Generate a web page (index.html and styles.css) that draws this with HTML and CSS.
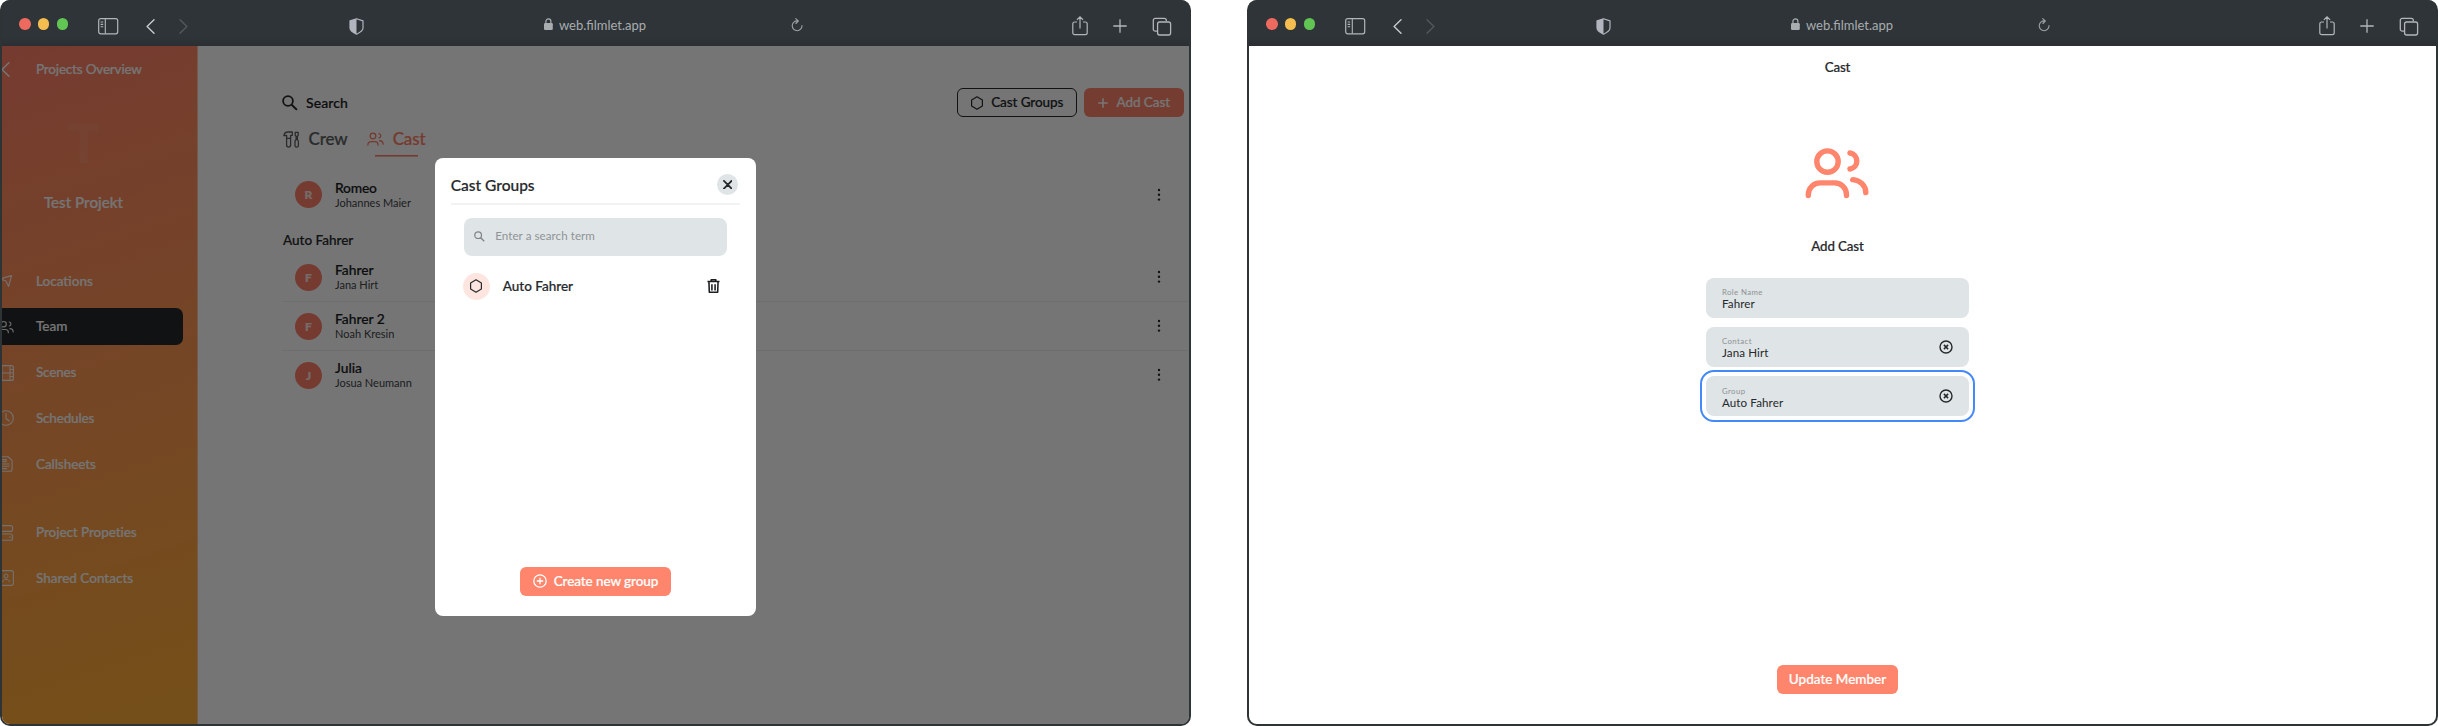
FILE: index.html
```html
<!DOCTYPE html>
<html lang="en">
<head>
<meta charset="utf-8">
<title>filmlet</title>
<link rel="stylesheet" href="styles.css">
</head>
<body>
<svg class="defs" width="0" height="0">
  <symbol id="i-panel" viewBox="0 0 21 17"><rect x=".7" y=".7" width="19" height="15.1" rx="2" fill="none" stroke="currentColor" stroke-width="1.2"/><path d="M7.3 1v14.500M2.600 4h2.600M2.600 6.400h2.600M2.600 8.800h2.600" fill="none" stroke="currentColor" stroke-width="1.100"/></symbol>
  <symbol id="i-left" viewBox="0 0 9 15"><path d="M8 .8 1.100 7.500 8 14.200" fill="none" stroke="currentColor" stroke-width="1.400" stroke-linecap="round" stroke-linejoin="round"/></symbol>
  <symbol id="i-right" viewBox="0 0 9 15"><path d="M1 .8 7.900 7.500 1 14.200" fill="none" stroke="currentColor" stroke-width="1.400" stroke-linecap="round" stroke-linejoin="round"/></symbol>
  <symbol id="i-shield" viewBox="0 0 15 17"><path d="M7.500.7 14 2.900v7.200c0 2.600-3.300 4.700-6.500 6.100C4.300 14.800 1 12.700 1 10.100V2.900z" fill="none" stroke="currentColor" stroke-width="1.200" stroke-linejoin="round"/><path d="M7.500.7v15.500C4.300 14.800 1 12.700 1 10.100V2.900z" fill="currentColor"/></symbol>
  <symbol id="i-lock" viewBox="0 0 9 12"><rect y="5" width="8.800" height="7" rx="1.200" fill="currentColor"/><path d="M1.900 5.500V3.400a2.500 2.500 0 0 1 5 0v2.100" fill="none" stroke="currentColor" stroke-width="1.200"/></symbol>
  <symbol id="i-reload" viewBox="0 0 12 14"><path d="M6.500 2.900A4.900 4.900 0 1 0 11 7.600M4.700.6 7.300 3 4.900 5.500" fill="none" stroke="currentColor" stroke-width="1.100" stroke-linecap="round" stroke-linejoin="round"/></symbol>
  <symbol id="i-share" viewBox="0 0 16 20"><path d="M5 6H2.700A1.900 1.900 0 0 0 .8 7.900v8.900a1.900 1.900 0 0 0 1.900 1.900h10.600a1.900 1.900 0 0 0 1.900-1.900V7.900A1.900 1.900 0 0 0 13.300 6H11M8 12.500V1M4.900 3.900 8 .9l3.100 3" fill="none" stroke="currentColor" stroke-width="1.200"/></symbol>
  <symbol id="i-plus" viewBox="0 0 14 14"><path d="M7 .3v13.400M.3 7h13.400" stroke="currentColor"/></symbol>
  <symbol id="i-tabs" viewBox="0 0 20 19"><rect x="5.600" y="5" width="13" height="13" rx="2" fill="none" stroke="currentColor" stroke-width="1.300"/><path d="M5 14.200H3.300a2 2 0 0 1-2-2V3.300a2 2 0 0 1 2-2h9a2 2 0 0 1 2 2v1" fill="none" stroke="currentColor" stroke-width="1.300"/></symbol>
  <symbol id="i-users" viewBox="0 0 64 52"><g fill="none" stroke="currentColor" stroke-linecap="round"><circle cx="22.500" cy="14.600" r="10.700"/><path d="M3.300 48.600v-1A11.700 11.700 0 0 1 15 35.900h14.800a11.700 11.700 0 0 1 11.700 11.700v1M45 6a8.100 8.100 0 0 1 0 16M47.700 32.600c7.500.5 13 6 13.100 13"/></g></symbol>
  <symbol id="i-search" viewBox="0 0 16 16"><circle cx="6" cy="6" r="4.900" fill="none" stroke="currentColor" stroke-width="1.800"/><path d="m9.700 9.700 5.200 5.200" stroke="currentColor" stroke-width="2"/></symbol>
  <symbol id="i-hex" viewBox="0 0 14 14"><path d="M7 .8 12.400 3.900v6.200L7 13.200 1.600 10.100V3.900z" fill="none" stroke="currentColor" stroke-linejoin="round"/></symbol>
  <symbol id="i-tools" viewBox="0 0 17 17"><path d="M.9 4.700C1.300 2 3 1 5 1h4.300v3.300H7.600v3h-4v-3zM3.600 7.300h4v7c0 1.300-.8 1.800-2 1.800s-2-.5-2-1.800zM12.200 1.300h3v3l-.8 1v3h-1.300v-3l-.9-1zM12 10.500c0-1.100.7-1.900 1.700-1.900s1.700.8 1.700 1.900v3.900c0 1.100-.7 1.700-1.700 1.700s-1.700-.6-1.700-1.700z" fill="none" stroke="currentColor" stroke-width="1.300" stroke-linejoin="round"/></symbol>
  <symbol id="i-dots" viewBox="0 0 4 14"><g fill="currentColor"><circle cx="2" cy="2" r="1.200"/><circle cx="2" cy="6.800" r="1.200"/><circle cx="2" cy="11.600" r="1.200"/></g></symbol>
  <symbol id="i-trash" viewBox="0 0 14 16"><path d="M.5 3.200h13M4.500 3V1.200h5V3M2.100 3.500l.4 11.300h9l.4-11.300M5.300 6v6.800M8.700 6v6.800" fill="none" stroke="currentColor" stroke-width="1.700" stroke-linejoin="round"/></symbol>
  <symbol id="i-addc" viewBox="0 0 14 14"><circle cx="7" cy="7" r="6.200" fill="none" stroke="currentColor" stroke-width="1.300"/><path d="M7 3.800v6.400M3.800 7h6.400" stroke="currentColor" stroke-width="1.300"/></symbol>
  <symbol id="i-clear" viewBox="0 0 14 14"><circle cx="7" cy="7" r="6" fill="none" stroke="currentColor" stroke-width="1.400"/><path d="m4.900 4.900 4.200 4.200m0-4.200L4.900 9.100" stroke="currentColor" stroke-width="1.500"/></symbol>
  <symbol id="i-x" viewBox="0 0 10 10"><path d="m1 1 8 8m0-8L1 9" stroke="currentColor" stroke-width="1.900" stroke-linecap="round"/></symbol>
  <symbol id="i-nav" viewBox="0 0 16 16"><path d="M13.600 2.600 2 6l6 2 2.600 5.500z" fill="none" stroke="currentColor" stroke-width="1.100" stroke-linejoin="round"/></symbol>
  <symbol id="i-film" viewBox="0 0 16 16"><rect x=".6" y=".6" width="14.800" height="14.800" rx="2" fill="none" stroke="currentColor" stroke-width="1.100"/><path d="M4 1v14M12 1v14M4 8h8M1 4.500h3M1 8h3M1 11.500h3M12 4.500h3M12 8h3M12 11.500h3" stroke="currentColor"/></symbol>
  <symbol id="i-clock" viewBox="0 0 16 16"><circle cx="8" cy="8" r="7.300" fill="none" stroke="currentColor" stroke-width="1.100"/><path d="M8 3v5.500l3.500 2.800" fill="none" stroke="currentColor" stroke-width="1.100"/></symbol>
  <symbol id="i-sheet" viewBox="0 0 16 16"><path d="M2.600.8h7.600l3.900 3.800v8.600a2 2 0 0 1-2 2H2.600a1 1 0 0 1-1-1V1.800a1 1 0 0 1 1-1zM4 8h7.500M4 10.300h7.500M4 12.600h5M5 3.500h3v2.300H5z" fill="none" stroke="currentColor" stroke-width="1.100"/></symbol>
  <symbol id="i-props" viewBox="0 0 16 16"><rect x=".6" y=".6" width="14" height="5.800" rx="2" fill="none" stroke="currentColor" stroke-width="1.100"/><rect x=".6" y="9" width="14" height="6.200" rx="2" fill="none" stroke="currentColor" stroke-width="1.100"/><path d="M11 12.100h2.400M2.500 6.500V9" stroke="currentColor"/></symbol>
  <symbol id="i-card" viewBox="0 0 16 16"><rect x=".6" y=".6" width="14.800" height="14.800" rx="2.500" fill="none" stroke="currentColor" stroke-width="1.100"/><circle cx="8" cy="6" r="2" fill="none" stroke="currentColor"/><path d="M4.500 12.200c0-4 7-4 7 0" fill="none" stroke="currentColor"/></symbol>
</svg>
<div class="desk">
  <section class="window">
    <header class="bar">
      <i class="light red"></i><i class="light yellow"></i><i class="light green"></i>
      <svg class="b-panel"><use href="#i-panel"/></svg>
      <svg class="b-left"><use href="#i-left"/></svg>
      <svg class="b-right"><use href="#i-right"/></svg>
      <svg class="b-shield"><use href="#i-shield"/></svg>
      <div class="url"><svg class="b-lock"><use href="#i-lock"/></svg><span>web.filmlet.app</span></div>
      <svg class="b-reload"><use href="#i-reload"/></svg>
      <div class="bar-end">
        <svg class="b-share"><use href="#i-share"/></svg>
        <svg class="b-plus"><use href="#i-plus"/></svg>
        <svg class="b-tabs"><use href="#i-tabs"/></svg>
      </div>
    </header>
    <div class="app">
      <nav class="side">
        <a class="back"><svg><use href="#i-left"/></svg><span class="t2">Projects Overview</span></a>
        <div class="mono">T</div>
        <div class="project">Test Projekt</div>
        <a class="item"><svg><use href="#i-nav"/></svg><span>Locations</span></a>
        <a class="item on"><svg class="users"><use href="#i-users"/></svg><span>Team</span></a>
        <a class="item"><svg><use href="#i-film"/></svg><span class="t2">Scenes</span></a>
        <a class="item"><svg><use href="#i-clock"/></svg><span class="t2">Schedules</span></a>
        <a class="item"><svg><use href="#i-sheet"/></svg><span class="t1">Callsheets</span></a>
        <a class="item gap"><svg><use href="#i-props"/></svg><span class="t1">Project Propeties</span></a>
        <a class="item"><svg><use href="#i-card"/></svg><span>Shared Contacts</span></a>
      </nav>
      <main class="main">
        <div class="tools">
          <svg class="m-search"><use href="#i-search"/></svg><span class="search">Search</span>
          <button class="btn outline"><svg class="hex"><use href="#i-hex"/></svg><span class="t1">Cast Groups</span></button>
          <button class="btn add"><svg><use href="#i-plus"/></svg><span class="t1">Add Cast</span></button>
        </div>
        <div class="tabs">
          <span class="tab"><svg class="crew"><use href="#i-tools"/></svg>Crew</span>
          <span class="tab sel"><svg class="cast users"><use href="#i-users"/></svg>Cast</span>
        </div>
        <div class="row first"><b class="av">R</b><div><p class="name t2">Romeo</p><p class="sub">Johannes Maier</p></div><svg class="dots"><use href="#i-dots"/></svg></div>
        <h3 class="group">Auto Fahrer</h3>
        <div class="row"><b class="av">F</b><div><p class="name">Fahrer</p><p class="sub">Jana Hirt</p></div><svg class="dots"><use href="#i-dots"/></svg></div>
        <div class="row"><b class="av">F</b><div><p class="name">Fahrer 2</p><p class="sub">Noah Kresin</p></div><svg class="dots"><use href="#i-dots"/></svg></div>
        <div class="row"><b class="av">J</b><div><p class="name">Julia</p><p class="sub">Josua Neumann</p></div><svg class="dots"><use href="#i-dots"/></svg></div>
      </main>
      <div class="shade">
        <div class="modal">
          <div class="m-head"><h2>Cast Groups</h2><button class="close"><svg><use href="#i-x"/></svg></button></div>
          <div class="field-search"><svg><use href="#i-search"/></svg><span>Enter a search term</span></div>
          <div class="entry"><i class="badge"><svg class="hex"><use href="#i-hex"/></svg></i><span>Auto Fahrer</span><svg class="trash"><use href="#i-trash"/></svg></div>
          <button class="btn create"><svg><use href="#i-addc"/></svg><span class="t1">Create new group</span></button>
        </div>
      </div>
    </div>
  </section>
  <section class="window">
    <header class="bar">
      <i class="light red"></i><i class="light yellow"></i><i class="light green"></i>
      <svg class="b-panel"><use href="#i-panel"/></svg>
      <svg class="b-left"><use href="#i-left"/></svg>
      <svg class="b-right"><use href="#i-right"/></svg>
      <svg class="b-shield"><use href="#i-shield"/></svg>
      <div class="url"><svg class="b-lock"><use href="#i-lock"/></svg><span>web.filmlet.app</span></div>
      <svg class="b-reload"><use href="#i-reload"/></svg>
      <div class="bar-end">
        <svg class="b-share"><use href="#i-share"/></svg>
        <svg class="b-plus"><use href="#i-plus"/></svg>
        <svg class="b-tabs"><use href="#i-tabs"/></svg>
      </div>
    </header>
    <div class="form">
      <h1>Cast</h1>
      <svg class="hero"><use href="#i-users"/></svg>
      <h2 class="form-title">Add Cast</h2>
      <div class="field"><div><label>Role Name</label><p>Fahrer</p></div></div>
      <div class="field"><div><label>Contact</label><p>Jana Hirt</p></div><svg><use href="#i-clear"/></svg></div>
      <div class="field focus"><div><label>Group</label><p>Auto Fahrer</p></div><svg><use href="#i-clear"/></svg></div>
      <button class="btn update"><span>Update Member</span></button>
    </div>
  </section>
</div>
</body>
</html>
```
FILE: styles.css
```css
* { box-sizing: border-box; margin: 0; padding: 0; }
body { background: #fff; font: 500 13.5px/17px Lato, sans-serif; color: #26292b; overflow: hidden; -webkit-text-stroke: .2px currentColor; }
svg { display: block; flex: none; }
.defs { position: absolute; }
button { font: inherit; border: 0; }
.t1 { letter-spacing: -.08px; }
.t2 { letter-spacing: -.2px; }

.desk { display: flex; gap: 56px; height: 726px; }
.window { width: 1191px; height: 726px; background: #2e3336; border-radius: 10px; padding: 0 2px 2px; display: flex; flex-direction: column; overflow: hidden; }

.bar { height: 46px; flex: none; display: flex; align-items: flex-start; padding-left: 17.200px; color: #b2b6ba; background: linear-gradient(#2e3437 80%, #2b2f33); }
.light { width: 11.600px; height: 11.600px; border-radius: 50%; margin: 18.300px 7.100px 0 0; }
.red { background: #ef6a5e; }
.yellow { background: #f5bd4f; }
.green { background: #61c554; }
.b-panel { width: 21px; height: 17px; margin: 17.700px 0 0 22.700px; }
.b-left { width: 9px; height: 15px; margin: 18.500px 0 0 27.500px; color: #c8cbcd; }
.b-right { width: 9px; height: 15px; margin: 18.500px 0 0 23.500px; color: #54585c; }
.b-shield { width: 15px; height: 17px; margin: 17.500px 0 0 161px; color: #b2b4be; }
.url { display: flex; margin: 18px 0 0 180px; width: 247.500px; font-weight: 400; font-size: 13px; line-height: 14px; color: #a9adb0; -webkit-text-stroke: 0; }
.b-lock { width: 9px; height: 12px; margin-right: 6px; }
.b-reload { width: 12px; height: 14px; margin-top: 17.500px; color: #9da1a5; }
.bar-end { display: flex; margin-left: 268.500px; }
.b-share { width: 16px; height: 20px; margin-top: 15.800px; }
.b-plus { width: 14px; height: 14px; margin: 19px 0 0 25.500px; stroke-width: 1.300px; }
.b-tabs { width: 20px; height: 19px; margin: 16.500px 0 0 24.500px; }

.app { position: relative; flex: 1; display: flex; background: #fff; border-radius: 0 0 8px 8px; overflow: hidden; }
.side { width: 196px; flex: none; background: linear-gradient(162deg, #ff8169, #ff9953 50%, #ffac37 95%); color: #fff; overflow: hidden; border-right: 1px solid #ffc2a0; }
.back { display: flex; align-items: center; height: 17px; margin: 14.500px 0 0 -1px; }
.back svg { width: 9px; height: 15px; margin-right: 26px; }
.mono { margin: 32px 0 0; width: 163px; text-align: center; font: 900 54px/65px Lato, sans-serif; color: rgba(255, 255, 255, .07); -webkit-text-stroke: 0; }
.project { margin-top: 17px; width: 163px; text-align: center; font-size: 15.200px; line-height: 20px; }
.item { display: flex; align-items: center; height: 37px; margin-top: 8.800px; margin-right: 14px; border-radius: 0 7px 7px 0; padding-left: 34px; }
.item svg { width: 16px; height: 16px; margin: 0 22.500px 0 -38.500px; flex: none; opacity: .9; }
.project + .item { margin-top: 51px; }
.on { background: #26282a; }
.gap { margin-top: 31.500px; }
.users { stroke-width: 4.800px; }

.main { flex: 1; padding: 42px 0 0 84px; }
.tools { display: flex; align-items: center; height: 29px; padding-right: 5px; }
.m-search { width: 16px; height: 16px; margin-right: 8px; }
.search { font-size: 14px; margin-right: auto; letter-spacing: .1px; color: #191b1d; }
.btn { display: flex; align-items: center; justify-content: center; height: 29.300px; border-radius: 6px; color: #fff; background: #ff866c; }
.outline { width: 119.500px; background: none; border: 1.300px solid #26292b; color: #26292b; margin-right: 7px; gap: 7px; }
.hex { width: 14px; height: 14px; stroke-width: 1.200px; }
.add { width: 100.500px; gap: 9px; }
.add svg { width: 10px; height: 10px; stroke-width: 2.200px; }
.tabs { display: flex; gap: 19.500px; margin: 10.500px 0 0 1px; font-size: 17px; line-height: 22px; height: 30.500px; }
.tab { display: flex; color: #5b5e60; letter-spacing: -.1px; height: 29px; }
.crew { width: 17px; height: 17px; margin: 3px 8.500px 0 0; }
.cast { width: 17px; height: 14px; margin: 4px 8.500px 0 0; }
.sel { color: #ff7f66; background: linear-gradient(#ff7f66, #ff7f66) 8px 27px / 43px 1.600px no-repeat; }
.row { display: flex; align-items: center; height: 48.800px; padding: 0 23px 0 13px; border-bottom: 1px solid #f0f0f0; }
.row:last-child, .first { border-bottom-color: transparent; }
.first { margin-top: 12.800px; }
.av { width: 27px; height: 27px; border-radius: 50%; background: #ff826a; color: #ffe9e3; text-align: center; font: 900 12px/27px Lato, sans-serif; margin-right: 13px; }
.name { line-height: 16px; font-size: 13.800px; color: #191b1d; }
.sub { font: 400 11px/14px Lato, sans-serif; color: #404447; -webkit-text-stroke: 0; }
.dots { width: 4px; height: 14px; margin-left: auto; margin-right: 5px; }
.group { font-size: 13.500px; font-weight: 500; line-height: 17px; margin: 12.500px 0 4.500px 1px; }

.shade { position: absolute; inset: 0; background: rgba(0, 0, 0, .54); display: flex; justify-content: center; align-items: center; }
.modal { width: 320.500px; height: 458px; margin-top: 3px; background: #fff; border-radius: 8px; padding: 14px 15.500px 19.500px; display: flex; flex-direction: column; }
.m-head { display: flex; justify-content: space-between; align-items: center; height: 33px; border-bottom: 2px solid #f1f2f2; padding: 0 2px 5px 0; }
.m-head h2 { font-size: 15.500px; font-weight: 500; line-height: 20px; }
.close { width: 21.500px; height: 21.500px; border-radius: 50%; background: #dfe4e6; color: #26292b; display: flex; align-items: center; justify-content: center; }
.close svg { width: 9.500px; height: 9.500px; }
.field-search { display: flex; align-items: center; margin: 13px 13px 0; height: 38px; border-radius: 8px; background: #dfe4e6; color: #8f9496; font: 400 11.600px/14px Lato, sans-serif; padding: 0 0 2px 10.500px; -webkit-text-stroke: 0; }
.field-search svg { width: 11px; height: 11px; margin: 2px 10px 0 0; color: #7f8486; }
.field-search span { letter-spacing: .05px; }
.entry { display: flex; align-items: center; margin: 17px 20.500px 0 12px; height: 27px; }
.badge { width: 27px; height: 27px; border-radius: 50%; background: #ffe5e0; display: flex; align-items: center; justify-content: center; margin-right: 13px; }
.trash { width: 13px; height: 16px; margin-left: auto; color: #1c1e20; }
.create { width: 151px; margin: auto auto 0; gap: 7px; }
.create svg { width: 14px; height: 14px; }

.form { flex: 1; background: #fff; border-radius: 0 0 8px 8px; display: flex; flex-direction: column; align-items: center; padding: 12.500px 0 30px; }
.form h1, .form-title { font-size: 13.300px; font-weight: 500; line-height: 17px; letter-spacing: -.1px; }
.form h1 { margin-left: -10px; }
.hero { width: 64px; height: 52px; margin: 71.500px 0 0 -10.500px; color: #ff866c; stroke-width: 5.400px; }
.form-title { margin: 39px 0 22.500px -10px; }
.field { width: 263px; height: 40px; margin: 0 0 9.200px -10px; border-radius: 8px; background: #dfe4e6; display: flex; align-items: center; justify-content: space-between; padding: 2px 16.500px 0 16px; -webkit-text-stroke: 0; }
.field label { display: block; font: 400 7.800px/9px Lato, sans-serif; letter-spacing: .4px; color: #8d9294; margin-top: 1.500px; }
.field p { font: 400 11.600px/13px Lato, sans-serif; letter-spacing: .1px; }
.field svg { width: 14px; height: 14px; margin-top: -1px; }
.focus { outline: 2px solid #4489fa; outline-offset: 4px; }
.update { width: 121px; margin: auto 0 0 -10px; }
```
